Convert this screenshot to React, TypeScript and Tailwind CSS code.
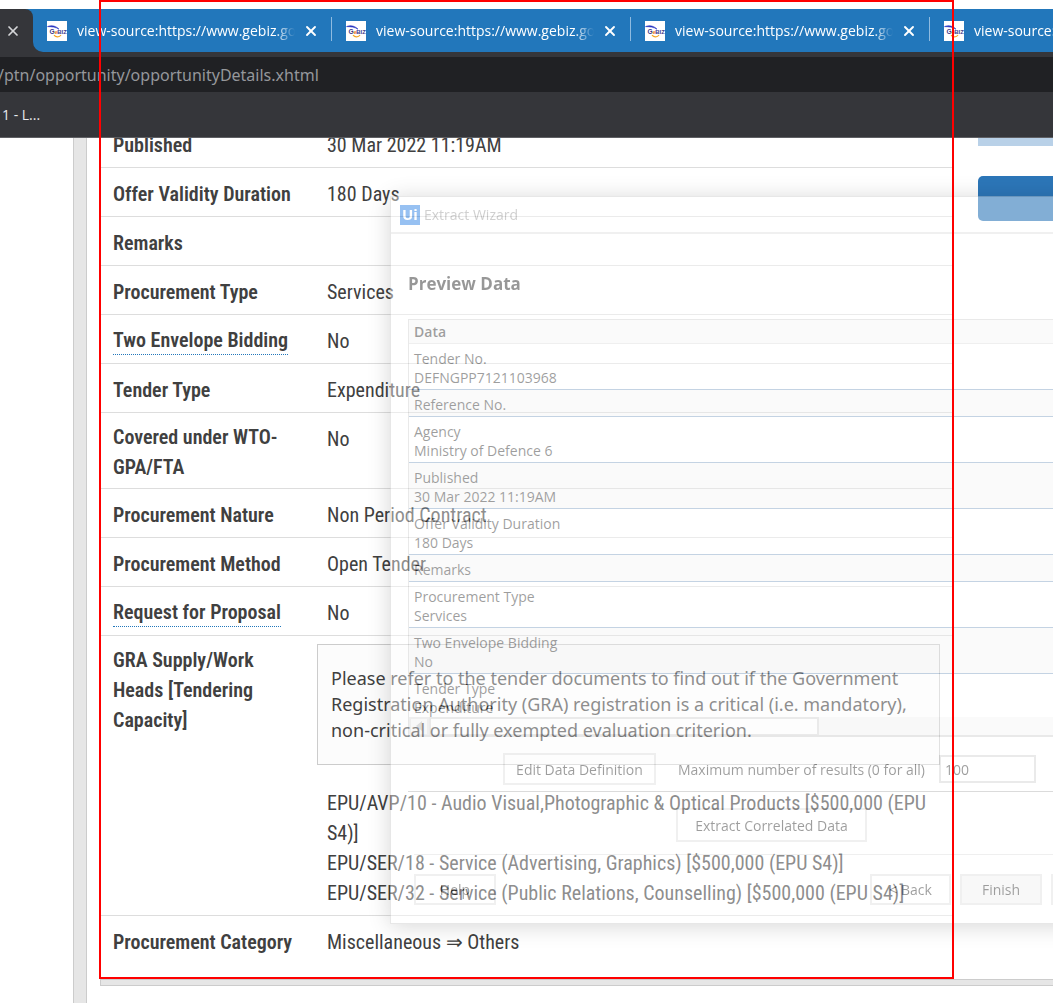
import { X } from "lucide-react";
import type { ReactNode } from "react";

const UI = "font-['Open_Sans','Noto_Sans',sans-serif]";
const PAGE = "font-['Roboto_Condensed','Roboto',sans-serif]";

function GebizIcon() {
  return (
    <svg viewBox="0 0 20 20" className="size-5 shrink-0 bg-white" aria-hidden="true">
      <path d="M0.5 5.6C4.5 3.8 9 5 12 8.2C9 6.2 5 5.6 0.5 5.6Z" fill="#1c2cc0" stroke="#1c2cc0" strokeWidth="0.6" />
      <path d="M7 14.2C9 16.6 12.4 16.4 14 14" fill="none" stroke="#f5a623" strokeWidth="1.2" />
      <text x="2.6" y="12.6" fontSize="6.6" fontWeight="700" fontFamily="Liberation Sans" fill="#3c3a8c">G</text>
      <text x="7.4" y="12.6" fontSize="6" fontWeight="700" fontFamily="Liberation Sans" fill="#f07d1a">e</text>
      <text x="10.2" y="12.6" fontSize="6" fontWeight="700" fontFamily="Liberation Sans" fill="#3c3a8c">BIZ</text>
    </svg>
  );
}

function Tab() {
  return (
    <div className="relative flex w-[299px] shrink-0 items-center pl-3.5 text-white">
      <GebizIcon />
      <span className="ml-2.5 w-[218px] overflow-hidden whitespace-nowrap text-sm leading-5 [mask-image:linear-gradient(to_right,black_198px,transparent_218px)]">
        view-source:https://www.gebiz.gov.sg
      </span>
      <button type="button" aria-label="Close tab" className="ml-2">
        <X className="size-4" strokeWidth={2.8} />
      </button>
      <span className="absolute right-0 top-2 h-6 w-px bg-[#8fbbe0]" />
    </div>
  );
}

function BrowserChrome() {
  return (
    <header className={`relative z-10 bg-[#35363a] ${UI}`}>
      <div className="h-[9px] bg-white" />
      <div className="flex h-[43px] overflow-hidden bg-[#2277bb]">
        <div className="flex w-[33px] shrink-0 items-center rounded-tr-lg bg-[#35363a] pl-[5px] text-[#d5d6d8]">
          <button type="button" aria-label="Close active tab">
            <X className="size-4" strokeWidth={2.6} />
          </button>
        </div>
        <div className="flex min-w-0 flex-1 bg-[#35363a]">
          <div className="flex min-w-0 flex-1 overflow-hidden rounded-bl-[10px] bg-[#2277bb]">
            <Tab />
            <Tab />
            <Tab />
            <Tab />
          </div>
        </div>
      </div>
      <div className="mt-[5px] flex h-[35px] items-center bg-[#202124]">
        <span className="-ml-0.5 font-['Noto_Sans',sans-serif] text-base text-[#95979b]">/ptn/opportunity/opportunityDetails.xhtml</span>
      </div>
      <div className="flex h-[46px] items-center border-b border-[#5f6064] pl-0.5 text-sm text-[#e8eaed]">1 - L...</div>
    </header>
  );
}

function Row({ label, help, wrap, last, children }: { label: string; help?: boolean; wrap?: boolean; last?: boolean; children?: ReactNode }) {
  return (
    <tr className={last ? "" : "border-b border-[#dddddd]"}>
      <th scope="row" className={`w-[217px] pl-[13px] pr-6 text-left align-top font-semibold ${wrap ? "pb-1.5 pt-[9px]" : last ? "pb-5 pt-[11px]" : "pb-[7px] pt-[11px]"}`}>
        {help ? (
          <a href="#help" className="inline-block border-b border-dotted border-[#2277bb] align-top leading-7">
            {label}
          </a>
        ) : (
          label
        )}
      </th>
      <td className="pl-2.5 pr-3 pt-[11px] align-top">{children}</td>
    </tr>
  );
}

function Details() {
  return (
    <table className={`-mt-[19px] w-[853px] shrink-0 border-collapse text-xl leading-[30px] text-[#404040] ${PAGE}`}>
      <tbody>
        <Row label="Published">30 Mar 2022 11:19AM</Row>
        <Row label="Offer Validity Duration">180 Days</Row>
        <Row label="Remarks" />
        <Row label="Procurement Type">Services</Row>
        <Row label="Two Envelope Bidding" help>No</Row>
        <Row label="Tender Type">Expenditure</Row>
        <Row label="Covered under WTO-GPA/FTA" wrap>No</Row>
        <Row label="Procurement Nature">Non Period Contract</Row>
        <Row label="Procurement Method">Open Tender</Row>
        <Row label="Request for Proposal" help>No</Row>
        <tr className="border-b border-[#dddddd]">
          <th scope="row" className="pl-[13px] pr-6 pt-[9px] text-left align-top font-semibold">GRA Supply/Work Heads [Tendering Capacity]</th>
          <td className="pb-[7px] pr-[13px] pt-2 align-top">
            <p className="mb-[23px] border border-[#cccccc] bg-[#fcfcfc] px-[13px] pb-[21px] pt-5 font-['Noto_Sans',sans-serif] text-lg leading-[26px]">
              Please refer to the tender documents to find out if the Government Registration Authority (GRA) registration is a critical (i.e.
              mandatory), non-critical or fully exempted evaluation criterion.
            </p>
            <ul className="pl-2.5">
              <li>EPU/AVP/10 - Audio Visual,Photographic &amp; Optical Products [$500,000 (EPU S4)]</li>
              <li>EPU/SER/18 - Service (Advertising, Graphics) [$500,000 (EPU S4)]</li>
              <li>EPU/SER/32 - Service (Public Relations, Counselling) [$500,000 (EPU S4)]</li>
            </ul>
          </td>
        </tr>
        <Row label="Procurement Category" last>Miscellaneous ⇒ Others</Row>
      </tbody>
    </table>
  );
}

const PREVIEW: string[][] = [
  ["Tender No.", "DEFNGPP7121103968"],
  ["Reference No."],
  ["Agency", "Ministry of Defence 6"],
  ["Published", "30 Mar 2022 11:19AM"],
  ["Offer Validity Duration", "180 Days"],
  ["Remarks"],
  ["Procurement Type", "Services"],
  ["Two Envelope Bidding", "No"],
  ["Tender Type", "Expenditure"],
];

function WizardButton({ children, className = "" }: { children: ReactNode; className?: string }) {
  return (
    <button type="button" className={`border-2 border-[#dadada] text-center ${className}`}>
      {children}
    </button>
  );
}

function ExtractWizard() {
  return (
    <section
      aria-label="Extract Wizard"
      className={`absolute -right-24 left-[390px] top-[196px] flex flex-col border border-[#c4c4c4] bg-white pb-[18px] text-sm leading-[19px] text-[#101010] opacity-[.41] shadow-[0_2px_22px_rgba(0,0,0,0.4)] ${UI}`}
    >
      <div className="flex h-[37px] shrink-0 items-center border-b-2 border-[#dadada] pl-[9px] text-[#8c8c8c]">
        <span className="mr-1 flex size-5 items-center justify-center bg-[#0067df] text-[15px] font-bold text-white">Ui</span>
        Extract Wizard
      </div>
      <h2 className="mt-[38px] pl-[17px] text-[17px] font-bold leading-6 text-black">Preview Data</h2>
      <div className="ml-[17px] mt-[23px] h-[418px] shrink-0 overflow-hidden border-b-2 border-l border-t border-[#c8c8c8]">
        <table className="w-full border-collapse">
          <thead>
            <tr className="h-[23px] border-b border-[#d8d8d8] bg-[#f3f3f3]">
              <th scope="col" className="pl-[5px] text-left font-semibold">Data</th>
            </tr>
          </thead>
          <tbody>
            {PREVIEW.map((lines, i) => (
              <tr key={i} className="border-b border-[#7094ba] odd:bg-white even:bg-[#f3f3f3] last:border-0">
                <td className="pb-0.5 pl-[5px] pt-[5px]">
                  {lines.map((line) => (
                    <div key={line}>{line}</div>
                  ))}
                </td>
              </tr>
            ))}
          </tbody>
        </table>
        <div className="-mt-0.5 flex h-[22px] bg-[#f3f3f3]">
          <button type="button" aria-label="Scroll left" className="flex h-[19px] w-5 items-center justify-center border-2 border-[#dadada]">
            <svg viewBox="0 0 8 10" className="h-2.5 w-2" aria-hidden="true">
              <path d="M7 0V10L1 5Z" fill="#b0b0b0" />
            </svg>
          </button>
          <div className="h-[19px] w-[390px] border-2 border-[#d0d0d0] bg-white" />
        </div>
      </div>
      <div className="mt-4 flex h-8 items-center justify-center">
        <WizardButton className="h-8 w-[153px]">Edit Data Definition</WizardButton>
        <label htmlFor="max-results" className="ml-[22px] mr-3.5 whitespace-nowrap">Maximum number of results (0 for all)</label>
        <input id="max-results" defaultValue="100" className="h-7 w-[97px] border-2 border-[#cccccc] bg-white px-1" />
      </div>
      <hr className="ml-[17px] mt-1.5 border-[#a8a8a8]" />
      <div className="mt-4 flex justify-center pl-1">
        <WizardButton className="h-[34px] w-[191px]">Extract Correlated Data</WizardButton>
      </div>
      <hr className="ml-[23px] mt-3 border-[#d8d8d8]" />
      <div className="mt-[19px] flex gap-[9px] pl-[23px] pr-[15px]">
        <WizardButton className="mr-auto h-[31px] w-[82px]">Help</WizardButton>
        <WizardButton className="h-[31px] w-[81px]">&lt; Back</WizardButton>
        <WizardButton className="h-[31px] w-[82px] bg-[#ededed]">Finish</WizardButton>
        <WizardButton className="h-[31px] w-[82px]">{null}</WizardButton>
      </div>
    </section>
  );
}

export default function App() {
  return (
    <div className="relative flex min-h-screen flex-col overflow-hidden bg-white">
      <BrowserChrome />
      <main className="flex flex-1 overflow-hidden pl-[73px]">
        <div className="w-3.5 shrink-0 border-x border-[#cccccc] bg-[#e6e6e6]" />
        <div className="flex min-w-0 flex-1 flex-col pl-[13px]">
          <div className="flex">
            <Details />
            <div className="flex flex-1 flex-col pl-[25px]">
              <div className="h-2 bg-[#b9d1e8]" />
              <button type="button" aria-label="Open tender" className="mt-[30px] h-[45px] rounded-l-[5px] bg-[#2c76b8]" />
            </div>
          </div>
          <div className="mt-0.5 h-[7px] border-y border-l border-[#cccccc] bg-[#e6e6e6]" />
          <div className="h-4" />
        </div>
      </main>
      <ExtractWizard />
      <div className="pointer-events-none absolute left-[99px] top-0 z-20 h-[979px] w-[855px] border-2 border-[#ff0000]" />
    </div>
  );
}
